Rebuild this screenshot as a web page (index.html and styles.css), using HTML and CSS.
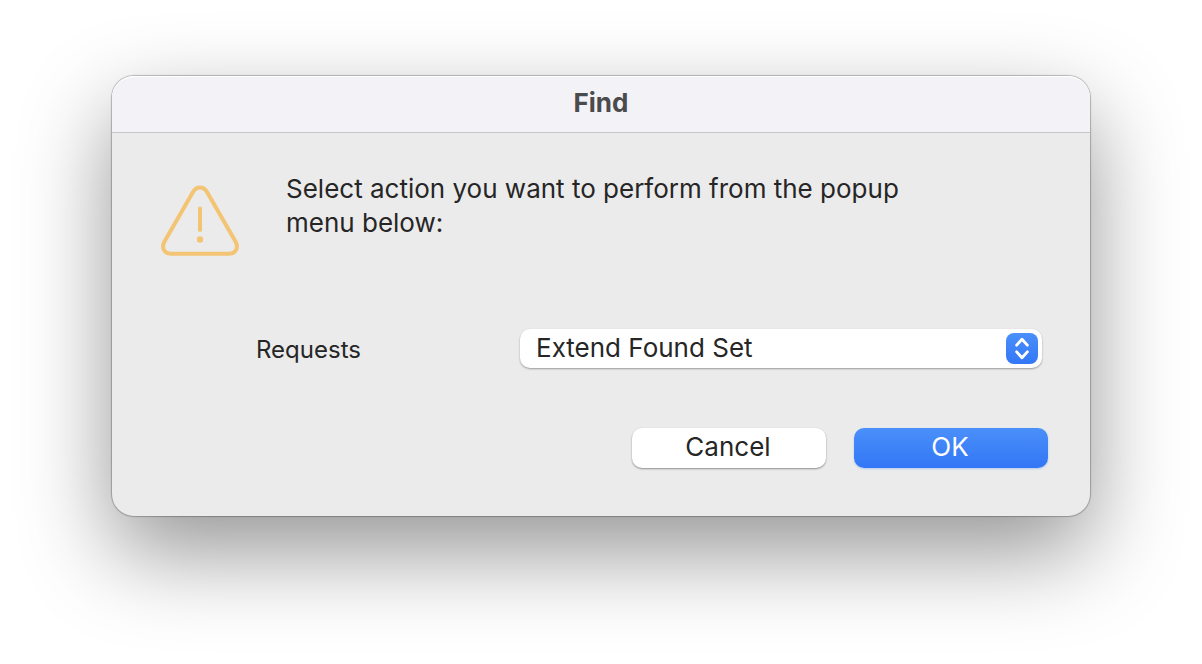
FILE: index.html
```html
<!DOCTYPE html>
<html lang="en">
<head>
    <meta charset="UTF-8" />
    <meta name="viewport" content="width=device-width, initial-scale=1.0" />
    <title>Find</title>
    <link rel="stylesheet" href="styles.css">
</head>
<body>
<form class="dialog" role="dialog" aria-labelledby="dialog-title">
    <header class="titlebar">
        <h1 id="dialog-title">Find</h1>
    </header>

    <div class="content">
        <div class="message">
            <svg class="warning" viewBox="0 0 80 74" aria-hidden="true">
                <path d="M33 8 C36.500 2 43.500 2 47 8 L75.500 57.500 C79 64 75.500 69.800 69 69.800 H11 C4.500 69.800 1 64 4.500 57.500 Z" />
                <path d="M40 24.500 V46" />
                <circle cx="40" cy="55.500" r="3.200" />
            </svg>
            <p>Select action you want to perform from the popup menu below:</p>
        </div>

        <div class="field">
            <label for="requests">Requests</label>
            <div class="popup">
                <select id="requests">
                    <option>Extend Found Set</option>
                </select>
                <svg class="arrows" viewBox="0 0 32 32" aria-hidden="true">
                    <path d="M10.500 12.500 L16 6.500 L21.500 12.500 M10.500 19.500 L16 25.500 L21.500 19.500" />
                </svg>
            </div>
        </div>

        <div class="actions">
            <button type="button">Cancel</button>
            <button type="button" class="primary">OK</button>
        </div>
    </div>
</form>
</body>
</html>
```
FILE: styles.css
```css
* {
    box-sizing: border-box;
}
body {
    font-family: Inter, "Liberation Sans", sans-serif;
    margin: 0;
    min-height: 100vh;
    padding: 76px 112px;
    background-color: #fff;
    color: #262626;
}
.dialog {
    border-radius: 22px;
    background-color: #ebebeb;
    box-shadow: 0 0 1px 1px rgba(0, 0, 0, 0.25), 0 36px 90px rgba(0, 0, 0, 0.42);
}
.titlebar {
    height: 57px;
    border-bottom: 1px solid #c6c6c8;
    border-radius: 22px 22px 0 0;
    background-color: #f3f2f7;
    box-shadow: inset 0 1px 0 #fff;
    text-align: center;
}
.titlebar h1 {
    margin: 0;
    font-size: 26px;
    line-height: 54px;
    font-weight: 700;
    color: #4b4a4c;
}
.content {
    padding: 39px 42px 48px 48px;
}
.message {
    display: flex;
    gap: 46px;
}
.warning {
    width: 80px;
    height: 74px;
    margin-top: 12px;
    flex-shrink: 0;
    fill: none;
    stroke: #f3c473;
    stroke-width: 4;
    stroke-linecap: round;
    stroke-linejoin: round;
}
.warning circle {
    fill: #f3c473;
    stroke: none;
}
.message p {
    max-width: 640px;
    margin: 0;
    font-size: 26px;
    line-height: 34px;
}
.field {
    display: flex;
    align-items: center;
    margin: 71px 6px 0 96px;
}
.field label {
    width: 264px;
    padding-top: 2px;
    font-size: 24px;
}
.popup {
    position: relative;
    flex: 1;
}
.popup select {
    display: block;
    width: 100%;
    height: 39px;
    padding: 0 48px 2px 16px;
    border: none;
    border-radius: 10px;
    background-color: #fff;
    box-shadow: 0 1px 2px rgba(0, 0, 0, 0.35);
    color: inherit;
    font-family: inherit;
    font-size: 26px;
    appearance: none;
}
.arrows {
    position: absolute;
    top: 4px;
    right: 4px;
    width: 32px;
    height: 31px;
    border-radius: 8px;
    background: linear-gradient(#4a8ff9, #3377f6);
    fill: none;
    stroke: #fff;
    stroke-width: 3;
    stroke-linecap: round;
    stroke-linejoin: round;
    pointer-events: none;
}
.actions {
    display: flex;
    justify-content: flex-end;
    gap: 28px;
    margin-top: 60px;
}
.actions button {
    width: 194px;
    height: 40px;
    padding: 0 2px 4px 0;
    border: none;
    border-radius: 10px;
    background-color: #fff;
    box-shadow: 0 1px 2px rgba(0, 0, 0, 0.4);
    color: inherit;
    font-family: inherit;
    font-size: 26px;
}
.actions .primary {
    background: linear-gradient(#4a90f9, #3376f6);
    box-shadow: 0 1px 2px rgba(51, 118, 246, 0.3);
    color: #fff;
}
```
